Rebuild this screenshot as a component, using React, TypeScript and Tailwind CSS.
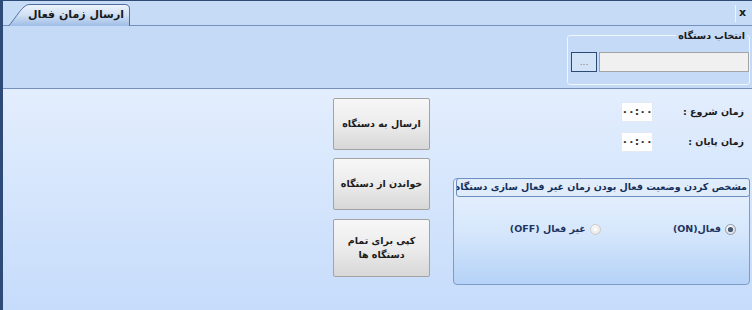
import React from "react";

const font = "font-['DejaVu_Sans',sans-serif]";

function Radio({ checked, disabled }: { checked?: boolean; disabled?: boolean }) {
  return (
    <svg width="11" height="11" viewBox="0 0 11 11" className="shrink-0">
      <defs>
        <radialGradient id={checked ? "rg1" : "rg2"} cx="0.4" cy="0.35" r="0.7">
          <stop offset="0" stopColor="#ffffff" />
          <stop offset="1" stopColor={disabled ? "#e6e6e6" : "#d4dbe4"} />
        </radialGradient>
      </defs>
      <circle cx="5.5" cy="5.5" r="5" fill={`url(#${checked ? "rg1" : "rg2"})`} stroke={disabled ? "#c9c9c9" : "#8d9aab"} strokeWidth="1" />
      {checked && <circle cx="5.5" cy="5.5" r="2.6" fill="#4b5870" />}
      {disabled && <circle cx="5.5" cy="5.5" r="2.6" fill="#ffffff" stroke="#e0e0e0" strokeWidth="0.8" />}
    </svg>
  );
}

function Btn({ children, h }: { children: React.ReactNode; h: string }) {
  return (
    <div
      className={`${h} w-[97px] rounded-[2px] border border-[#a3a3a3] bg-gradient-to-b from-[#f7f7f7] via-[#ececec] to-[#d7d7d7] flex items-center justify-center text-center text-[9.5px] font-bold leading-[14px] text-[#1c1c1c] whitespace-nowrap`}
      dir="rtl"
    >
      {children}
    </div>
  );
}

export default function App() {
  return (
    <div className={`w-[752px] h-[310px] flex flex-col overflow-hidden border-l-[3px] border-t border-[#2e4a76] ${font}`}>
      {/* tab strip */}
      <div className="h-[25px] shrink-0 flex items-end bg-[#c6dbf5] border-b border-[#7392bd]">
        <div className="relative ml-[5px] w-[122px] h-[22px] -mb-px flex items-center justify-center">
          <svg className="absolute inset-0" width="122" height="22" viewBox="0 0 122 22">
            <defs>
              <linearGradient id="tabg" x1="0" y1="0" x2="0" y2="1">
                <stop offset="0" stopColor="#eef4fc" />
                <stop offset="0.5" stopColor="#cfdff3" />
                <stop offset="1" stopColor="#9fbde6" />
              </linearGradient>
            </defs>
            <path d="M0.5 22 C6 16 12 6 16 3 C18 1.5 19 0.5 22 0.5 L117 0.5 C120 0.5 121.5 2 121.5 5 L121.5 22" fill="url(#tabg)" stroke="#4f6f9f" strokeWidth="1" />
          </svg>
          <span dir="rtl" className="relative ml-[14px] mt-[1px] text-[11px] font-bold text-[#1a1a1a]">ارسال زمان فعال</span>
        </div>
        <div className="ml-auto h-[24px] flex items-center">
          <div className="w-px h-[17px] bg-[#8ea8cc] border-r border-[#eef4fc]" />
          <span className="ml-[3px] mr-[6px] text-[11px] font-bold text-[#1a1a1a]">x</span>
        </div>
      </div>

      {/* header with device picker */}
      <div className="h-[63px] shrink-0 bg-[#c5daf6] border-b border-[#7591bc] flex justify-end pt-[3px] pr-[2px]">
        <fieldset dir="rtl" className="w-[183px] h-[56px] border border-[#eef5ff] rounded-[3px] pl-[3px] pb-[9px]">
          <legend className="px-[2px] mr-[2px] text-[9.5px] font-bold leading-[13px] text-[#1a1a1a]">انتخاب دستگاه</legend>
          <div className="mt-[10px] flex h-[20px] gap-[2px]">
            <div className="flex-1 bg-[#f0f0f0] border border-[#a4a4a4]" />
            <div className="w-[26px] border border-[#2d4a74] bg-[#d3e3f7] flex items-center justify-center text-[9px] text-[#7b7b7b] leading-none">...</div>
          </div>
        </fieldset>
      </div>

      {/* main */}
      <div className="flex-1 bg-gradient-to-b from-[#e3eefd] to-[#c6dcfb] flex justify-end pt-[9px] pr-[2px]">
        <div className="flex flex-col w-[97px] mr-[23px]">
          <Btn h="h-[52px]">ارسال به دستگاه</Btn>
          <div className="h-[8px]" />
          <Btn h="h-[52px]">خواندن از دستگاه</Btn>
          <div className="h-[9px]" />
          <Btn h="h-[58px]">
            <span>
              کپی برای تمام
              <br />
              دستگاه ها
            </span>
          </Btn>
        </div>

        <div className="w-[297px] flex flex-col pt-[4px]">
          <div className="flex justify-end items-center h-[20px]">
            <div className="w-[32px] h-[20px] bg-white border border-[#e3eaf4] flex items-center justify-center text-[11px] font-bold tracking-[1px] text-[#333]">۰۰:۰۰</div>
            <div dir="rtl" className="w-[97px] pr-[6px] text-right text-[9.5px] font-bold text-[#1a1a1a]">زمان شروع :</div>
          </div>
          <div className="flex justify-end items-center h-[20px] mt-[10px]">
            <div className="w-[32px] h-[20px] bg-white border border-[#e3eaf4] flex items-center justify-center text-[11px] font-bold tracking-[1px] text-[#333]">۰۰:۰۰</div>
            <div dir="rtl" className="w-[97px] pr-[6px] text-right text-[9.5px] font-bold text-[#1a1a1a]">زمان پایان :</div>
          </div>

          <div className="mt-[26px] h-[107px] rounded-[4px] border border-[#7d9dc8] bg-gradient-to-b from-[#e9f2fe] via-[#d6e7fc] to-[#b5d2f7] flex flex-col">
            <div className="-mt-px -mr-px ml-[2px] h-[19px] rounded-[3px] border border-[#6d8fc0] bg-[#e1ecfb] flex items-center justify-end pr-[2px] overflow-hidden">
              <span dir="rtl" className="text-[9.5px] font-bold text-[#14305c] whitespace-nowrap">مشخص کردن وضعیت فعال بودن زمان غیر فعال سازی دستگاه</span>
            </div>
            <div className="mt-[25px] flex justify-end items-center pr-[13px]">
              <div className="flex items-center gap-[4px]">
                <span dir="rtl" className="text-[9.5px] font-bold text-[#1d3461]">غیر فعال (OFF)</span>
                <Radio disabled />
              </div>
              <div className="w-[72px]" />
              <div className="flex items-center gap-[4px]">
                <span dir="rtl" className="text-[9.5px] font-bold text-[#1d3461]">فعال(ON)</span>
                <Radio checked />
              </div>
            </div>
          </div>
        </div>
      </div>
    </div>
  );
}
